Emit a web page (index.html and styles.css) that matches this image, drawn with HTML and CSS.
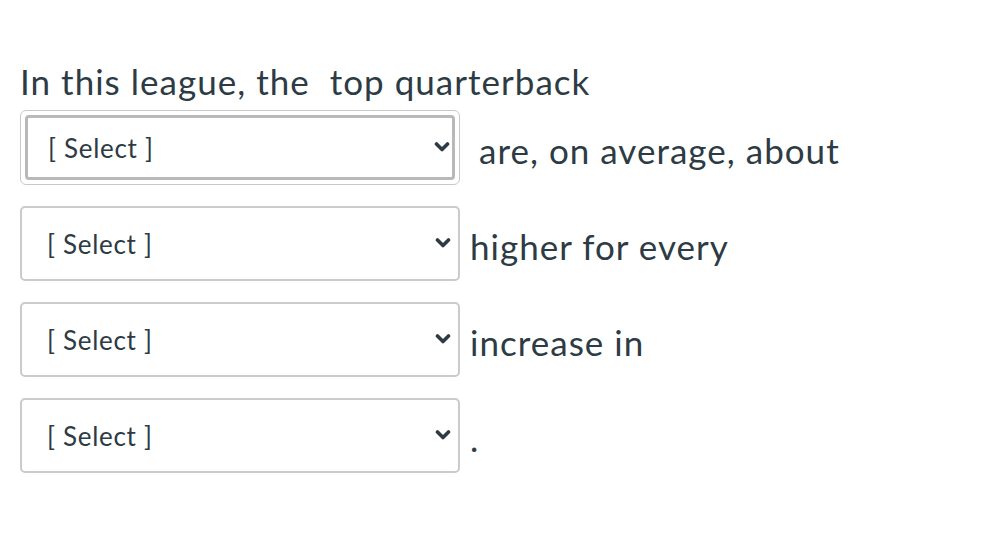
FILE: index.html
```html
<!DOCTYPE html>
<html>
<head>
<meta charset="utf-8">
<link rel="stylesheet" href="styles.css">
</head>
<body>
<div class="question">
  <p class="lead">In this league, the&nbsp; top quarterback</p>
  <div class="row">
    <div class="ring">
      <div class="sel sel-focus">
        <select><option>[ Select ]</option></select>
        <svg class="chev" viewBox="0 0 16 10" aria-hidden="true"><path d="M2.5 2 L8 7.5 L13.5 2" /></svg>
      </div>
    </div>
    <span class="after after-wide">are, on average, about</span>
  </div>
  <div class="row">
    <div class="sel">
      <select><option>[ Select ]</option></select>
      <svg class="chev" viewBox="0 0 16 10" aria-hidden="true"><path d="M2.5 2 L8 7.5 L13.5 2" /></svg>
    </div>
    <span class="after">higher for every</span>
  </div>
  <div class="row">
    <div class="sel">
      <select><option>[ Select ]</option></select>
      <svg class="chev" viewBox="0 0 16 10" aria-hidden="true"><path d="M2.5 2 L8 7.5 L13.5 2" /></svg>
    </div>
    <span class="after">increase in</span>
  </div>
  <div class="row">
    <div class="sel">
      <select><option>[ Select ]</option></select>
      <svg class="chev" viewBox="0 0 16 10" aria-hidden="true"><path d="M2.5 2 L8 7.5 L13.5 2" /></svg>
    </div>
    <span class="after">.</span>
  </div>
</div>
</body>
</html>
```

FILE: styles.css
```css
html, body {
  margin: 0;
  padding: 0;
  background: #ffffff;
}
body {
  font-family: Lato, "Open Sans", sans-serif;
  color: #2d3b45;
}
.question {
  padding: 56px 20px 0 20px;
}
.lead {
  margin: 0 0 3px 0;
  font-size: 35px;
  line-height: 51px;
  letter-spacing: 1.02px;
}
.row {
  display: flex;
  align-items: center;
  height: 75px;
  margin-bottom: 21px;
}
.ring {
  box-sizing: border-box;
  width: 440px;
  height: 75px;
  border: 1px solid #c9c9c9;
  border-radius: 6px;
  padding: 4px;
}
.sel {
  position: relative;
  box-sizing: border-box;
  width: 440px;
  height: 75px;
}
.sel-focus {
  width: 100%;
  height: 100%;
}
.sel select {
  -webkit-appearance: none;
  appearance: none;
  box-sizing: border-box;
  width: 100%;
  height: 100%;
  margin: 0;
  border: 2px solid #cbcbcb;
  border-radius: 5px;
  background: #ffffff;
  padding: 0 40px 0 25px;
  font-family: Lato, "Open Sans", sans-serif;
  font-size: 26px;
  letter-spacing: 0.7px;
  color: #2d3b45;
  outline: none;
}
.sel-focus select {
  border: 3px solid #b9b9b9;
  border-radius: 4px;
  padding-left: 20px;
}
.chev {
  position: absolute;
  right: 9px;
  top: 50%;
  width: 16px;
  height: 10px;
  margin-top: -6px;
  pointer-events: none;
}
.sel-focus .chev {
  right: 5px;
}
.chev path {
  fill: none;
  stroke: #2d3b45;
  stroke-width: 3.6;
  stroke-linecap: round;
  stroke-linejoin: round;
}
.after {
  font-size: 35px;
  line-height: 51px;
  letter-spacing: 1.02px;
  padding-top: 6px;
  margin-left: 10px;
}
.after-wide {
  margin-left: 19px;
}
```
